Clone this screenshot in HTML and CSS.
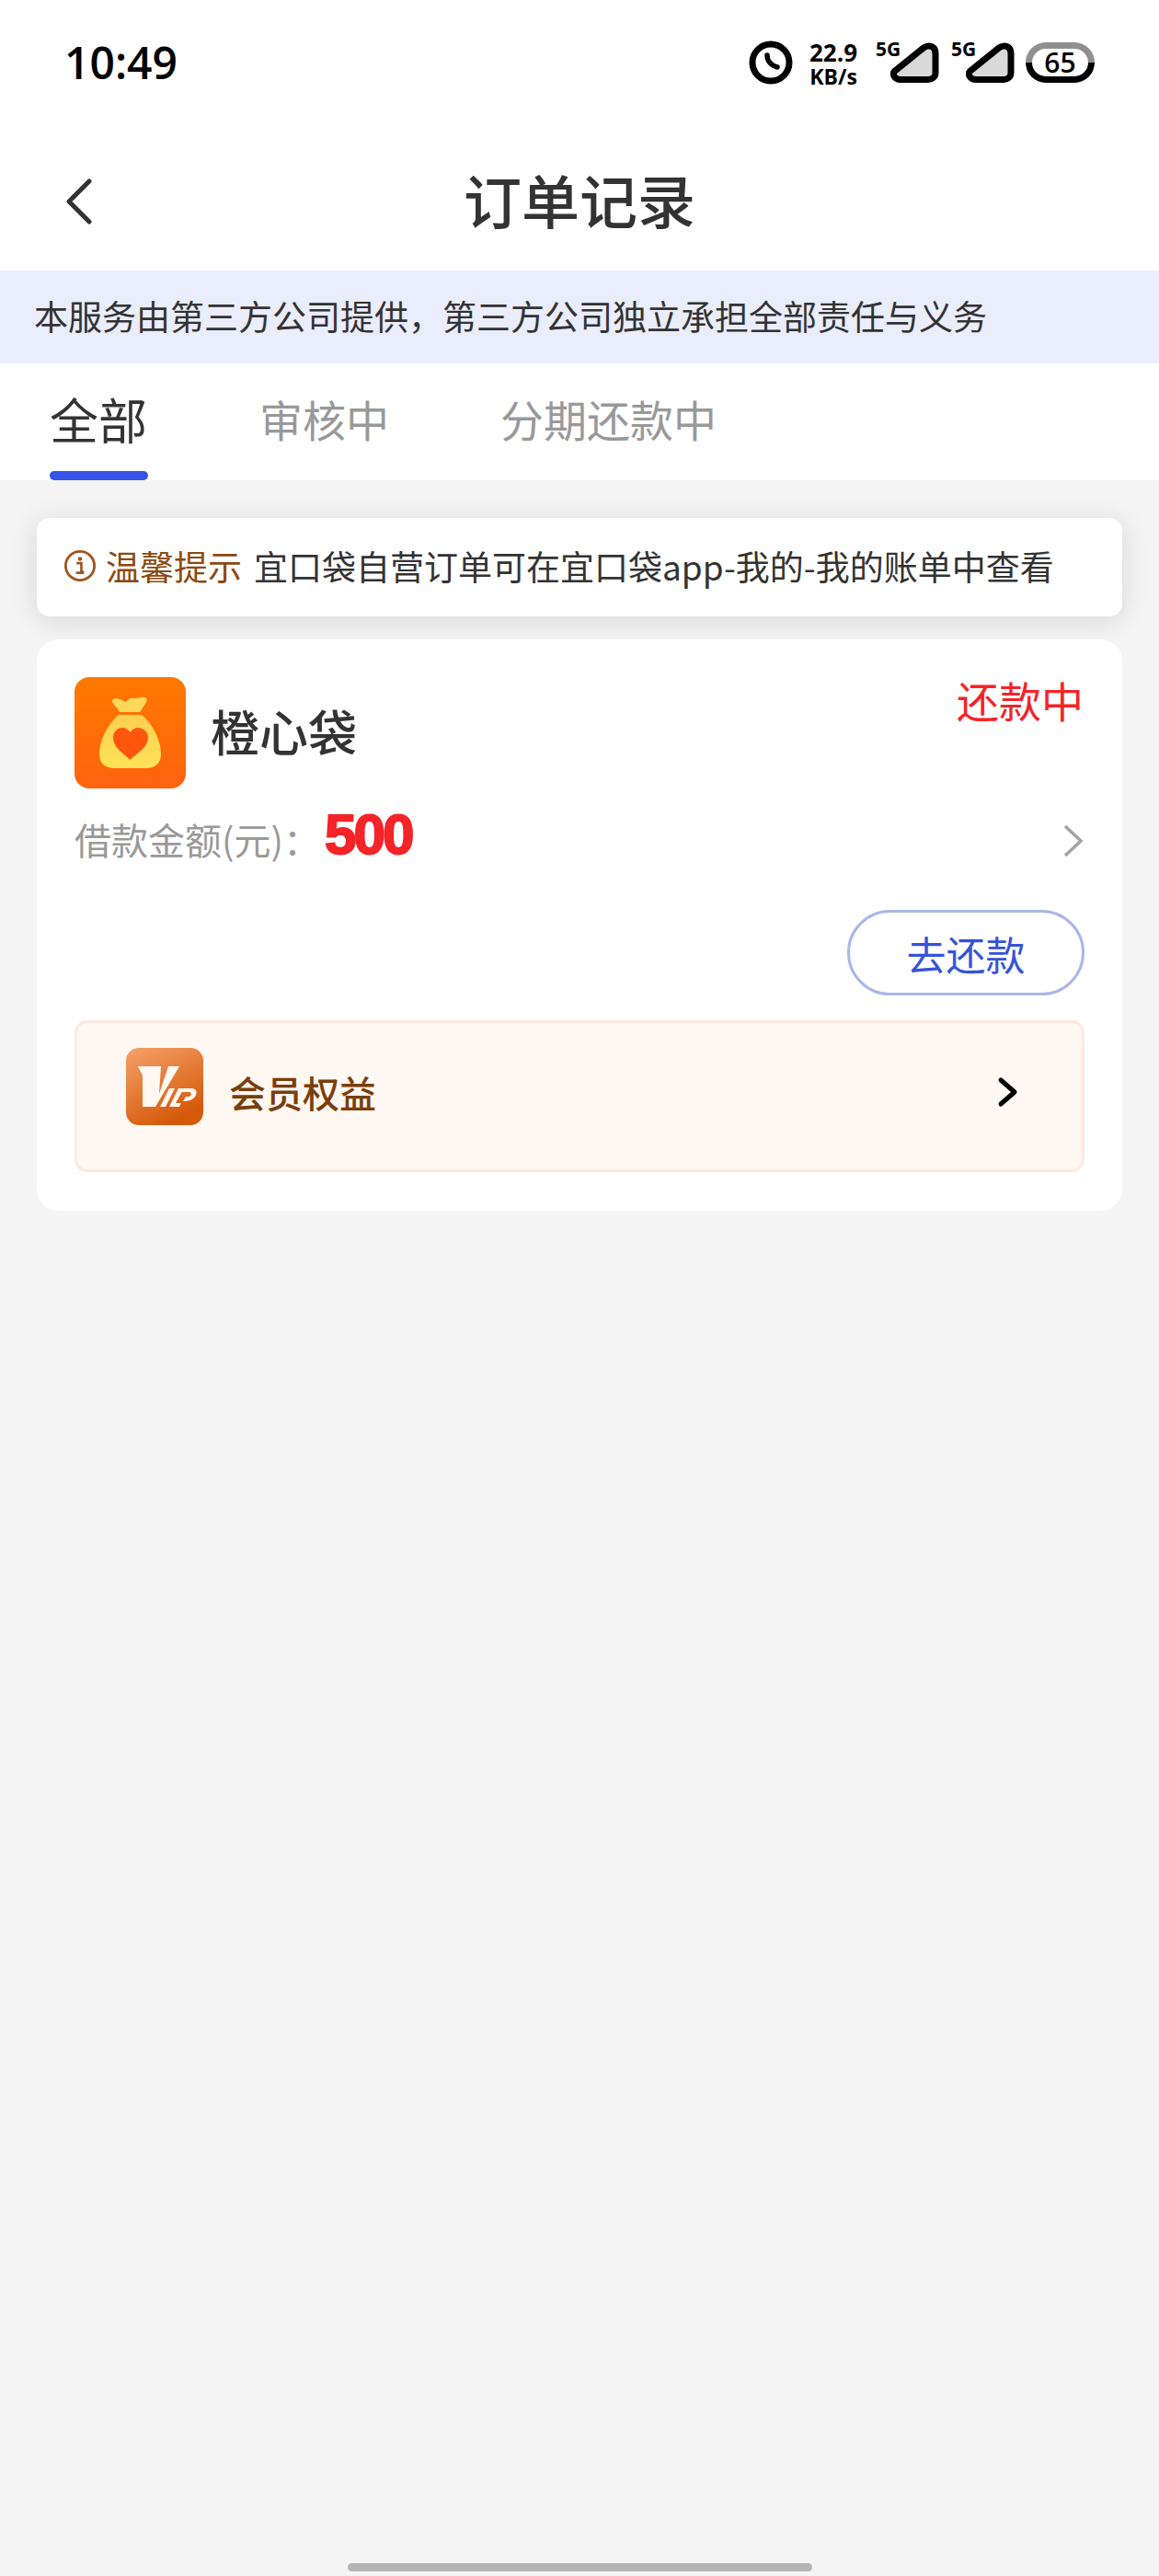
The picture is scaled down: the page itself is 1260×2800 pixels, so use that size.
FILE: index.html
```html
<!DOCTYPE html>
<html lang="zh-CN">
<head>
  <meta charset="UTF-8">
  <meta name="viewport" content="width=device-width, initial-scale=1.0">
  <title>订单记录</title>
  <link rel="stylesheet" href="styles.css">
</head>
<body>

<div class="page">
  <!-- Status bar -->
  <div class="status-bar">
    <span class="time">10:49</span>
    <div class="status-icons">
      <svg class="clock" width="48" height="48" viewBox="0 0 48 48">
        <circle cx="24" cy="24" r="20" fill="none" stroke="#000" stroke-width="7"/>
        <path d="M20 16 C20 22 24 27 31 29" fill="none" stroke="#000" stroke-width="5.500" stroke-linecap="round"/>
      </svg>
      <div class="speed">
        <span class="speed-value">22.9</span>
        <span class="speed-unit">KB/s</span>
      </div>
      <div class="signal">
        <span class="signal-label">5G</span>
        <svg width="54" height="46" viewBox="0 0 54 46">
          <path d="M5 33 L36 8 C42 4 49 6 49 14 L49 35 C49 40 45 42.500 41 42.500 L11 42.500 C4 42.500 1.500 36 5 33 Z" fill="#d9d9d9" stroke="#000" stroke-width="7" stroke-linejoin="round"/>
        </svg>
      </div>
      <div class="signal">
        <span class="signal-label">5G</span>
        <svg width="54" height="46" viewBox="0 0 54 46">
          <path d="M5 33 L36 8 C42 4 49 6 49 14 L49 35 C49 40 45 42.500 41 42.500 L11 42.500 C4 42.500 1.500 36 5 33 Z" fill="#d9d9d9" stroke="#000" stroke-width="7" stroke-linejoin="round"/>
        </svg>
      </div>
      <div class="battery">65</div>
    </div>
  </div>

  <!-- Title -->
  <div class="nav-bar">
    <svg class="back" width="32" height="52" viewBox="0 0 32 52">
      <path d="M27 3 L5 25 L27 47" fill="none" stroke="#333" stroke-width="5" stroke-linecap="round" stroke-linejoin="round"/>
    </svg>
    <h1>订单记录</h1>
  </div>

  <div class="notice">本服务由第三方公司提供，第三方公司独立承担全部责任与义务</div>

  <div class="tabs">
    <div class="tab active">全部</div>
    <div class="tab">审核中</div>
    <div class="tab">分期还款中</div>
  </div>

  <div class="content">
    <div class="tip">
      <svg width="36" height="36" viewBox="0 0 38 38">
        <circle cx="19" cy="19" r="16.500" fill="none" stroke="#a0561f" stroke-width="3"/>
        <circle cx="19" cy="11" r="2.400" fill="#a0561f"/>
        <path d="M15 16 H20.500 V26 H23.500 M14.500 27 H23.500" fill="none" stroke="#a0561f" stroke-width="2.800"/>
      </svg>
      <span class="tip-label">温馨提示</span>
      <span class="tip-text">宜口袋自营订单可在宜口袋app-我的-我的账单中查看</span>
    </div>

    <div class="card">
      <div class="card-head">
        <div class="app">
          <svg class="app-icon" width="121" height="121" viewBox="0 0 121 121">
            <defs>
              <linearGradient id="appBg" x1="0" y1="0" x2="0" y2="1">
                <stop offset="0" stop-color="#ff7a00"/>
                <stop offset="1" stop-color="#ff620f"/>
              </linearGradient>
              <linearGradient id="bag" x1="0" y1="0" x2="0" y2="1">
                <stop offset="0" stop-color="#ffd050"/>
                <stop offset="1" stop-color="#ffe258"/>
              </linearGradient>
            </defs>
            <rect width="121" height="121" rx="16" fill="url(#appBg)"/>
            <path d="M42 24 C46 22 52 25 55 27 C58 26 60 22 65 23 C70 24 74 20 78 23 C80 26 76 30 73 35 L71 38 H49 C47 33 38 27 42 24 Z" fill="#ffd85a"/>
            <path d="M48 41 H73 C84 50 94 68 94 84 C94 94 87 99 78 99 H43 C34 99 27 94 27 84 C27 68 37 50 48 41 Z" fill="url(#bag)"/>
            <path d="M60.500 90 C52 82 42 76 42 66 C42 59 47 55 52 55 C55.500 55 58.500 57 60.500 60 C62.500 57 65.500 55 69 55 C74 55 80 59 80 66 C80 76 69 82 60.500 90 Z" fill="#ff550d"/>
          </svg>
          <span class="app-name">橙心袋</span>
        </div>
        <span class="status">还款中</span>
      </div>

      <div class="amount-row">
        <div class="amount">
          <span class="amount-label">借款金额(元)：</span>
          <span class="amount-value">500</span>
        </div>
        <svg class="amount-arrow" width="24" height="38" viewBox="0 0 24 38">
          <path d="M3 3 L20 19 L3 35" fill="none" stroke="#a3a3a3" stroke-width="3.500"/>
        </svg>
      </div>

      <div class="actions">
        <button class="repay">去还款</button>
      </div>

      <div class="vip">
        <svg class="vip-icon" width="84" height="84" viewBox="0 0 84 84">
          <defs>
            <linearGradient id="vipBg" x1="0" y1="0" x2="0.500" y2="1">
              <stop offset="0" stop-color="#f7a26b"/>
              <stop offset="1" stop-color="#d55a0a"/>
            </linearGradient>
          </defs>
          <rect width="84" height="84" rx="14" fill="url(#vipBg)"/>
          <path d="M13 20 H38 L36 50 L46 20 H58 L32 64 H18 L18 30 Z" fill="#fff8f2"/>
          <path d="M47 44 H53 L43 64 H37 Z" fill="#fff8f2"/>
          <path d="M57 44 H63 L54 60 H60 L58 64 H47 Z" fill="#fff8f2"/>
          <path d="M62 44 H71 C77 44 78 49 75 53 C73 56 68 58 62 58 L65 53 H68 C71 53 72 48 69 48 H60 Z" fill="#fff8f2"/>
        </svg>
        <span class="vip-text">会员权益</span>
        <svg class="vip-arrow" width="24" height="34" viewBox="0 0 24 34">
          <path d="M4 4 L19 17 L4 30" fill="none" stroke="#000" stroke-width="5" stroke-linecap="round" stroke-linejoin="round"/>
        </svg>
      </div>
    </div>
  </div>

  <div class="home-bar"></div>
</div>

</body>
</html>
```

FILE: styles.css
```css
* {
  box-sizing: border-box;
}
html, body {
  margin: 0;
  padding: 0;
}
body {
  font-family: "Noto Sans CJK SC", "Noto Sans", sans-serif;
  color: #333;
  background-color: #f4f4f4;
}
.page {
  width: 1260px;
  height: 2800px;
  display: flex;
  flex-direction: column;
  overflow: hidden;
}

/* Status bar */
.status-bar {
  height: 134px;
  padding: 44px 70px 0 70px;
  display: flex;
  justify-content: space-between;
  align-items: flex-start;
  background: #fff;
  color: #000;
}
.time {
  font-family: "Open Sans", sans-serif;
  font-size: 48px;
  font-weight: 600;
  line-height: 48px;
}
.status-icons {
  display: flex;
  align-items: flex-start;
}
.speed {
  width: 52px;
  margin-left: 18px;
  display: flex;
  flex-direction: column;
  align-items: center;
  font-family: "Open Sans", sans-serif;
  font-weight: 700;
  color: #000;
}
.speed-value {
  font-size: 26px;
  line-height: 27px;
}
.speed-unit {
  font-size: 23px;
  line-height: 25px;
}
.signal {
  position: relative;
  width: 54px;
  height: 46px;
  margin-left: 36px;
}
.signal + .signal {
  margin-left: 28px;
}
.signal svg {
  display: block;
}
.signal-label {
  position: absolute;
  left: -16px;
  top: -3px;
  font-family: "Open Sans", sans-serif;
  font-size: 21px;
  line-height: 24px;
  font-weight: 700;
}
.battery {
  width: 75px;
  height: 44px;
  margin: 2px 0 0 11px;
  border: 7px solid transparent;
  border-radius: 22px;
  background: linear-gradient(#fff, #fff) padding-box, linear-gradient(#8f8f8f 50%, #000 50%) border-box;
  display: flex;
  align-items: center;
  justify-content: center;
  font-family: "Open Sans", sans-serif;
  font-size: 30px;
  font-weight: 600;
  line-height: 30px;
}

/* Title */
.nav-bar {
  position: relative;
  height: 160px;
  background: #fff;
  display: flex;
  align-items: flex-start;
  justify-content: center;
}
.back {
  position: absolute;
  left: 70px;
  top: 60px;
}
h1 {
  margin: 40px 0 0;
  font-size: 63px;
  font-weight: 500;
  line-height: 84px;
  color: #333;
}
.notice {
  height: 101px;
  padding-left: 37px;
  font-size: 37px;
  line-height: 98px;
  background: #e9edfc;
  color: #333;
}

/* Tabs */
.tabs {
  height: 127px;
  padding-left: 54px;
  background: #fff;
  display: flex;
  gap: 121px;
}
.tab {
  height: 127px;
  padding-top: 27px;
  display: flex;
  flex-direction: column;
  font-size: 47px;
  line-height: 66px;
  color: #999;
}
.tab.active {
  font-size: 53px;
  width: 107px;
  color: #333;
}
.tab.active::after {
  content: "";
  height: 10px;
  margin-top: auto;
  background: #3653e8;
  border-radius: 5px;
}

/* Content */
.content {
  flex: 1;
  padding: 41px 40px 0;
}
.tip {
  height: 107px;
  padding: 0 0 3px 29px;
  display: flex;
  align-items: center;
  background: #fff;
  border-radius: 14px;
  box-shadow: 0 4px 30px rgba(0, 0, 0, 0.12);
  font-size: 37px;
}
.tip-label {
  margin-left: 10px;
  color: #8a4a12;
}
.tip-text {
  margin-left: 13px;
  color: #333;
}
.card {
  height: 621px;
  margin-top: 25px;
  padding: 41px 41px 0;
  background: #fff;
  border-radius: 24px;
}
.card-head {
  display: flex;
  justify-content: space-between;
  align-items: flex-start;
}
.app {
  display: flex;
  align-items: center;
  gap: 27px;
}
.app-icon {
  display: block;
}
.app-name {
  margin-bottom: 6px;
  font-size: 53px;
  font-weight: 500;
  color: #333;
}
.status {
  margin-right: 1px;
  font-size: 46px;
  line-height: 48px;
  color: #f42428;
}
.amount-row {
  height: 60px;
  margin-top: 20px;
  display: flex;
  justify-content: space-between;
  align-items: center;
}
.amount {
  display: flex;
  align-items: center;
  gap: 5px;
}
.amount-label {
  margin-top: 10px;
  font-size: 40px;
  color: #999;
}
.amount-value {
  font-family: "Liberation Sans", sans-serif;
  font-size: 62px;
  font-weight: 700;
  line-height: 60px;
  letter-spacing: -3px;
  color: #f42428;
  -webkit-text-stroke: 2px #f42428;
}
.amount-arrow {
  margin-top: 14px;
}
.actions {
  margin-top: 52px;
  display: flex;
  justify-content: flex-end;
}
.repay {
  width: 258px;
  height: 93px;
  padding: 0;
  font-family: inherit;
  font-size: 43px;
  color: #3653d8;
  background: #fff;
  border: 3px solid #a9b8ea;
  border-radius: 47px;
}
.vip {
  height: 165px;
  margin-top: 27px;
  padding: 27px 68px 0 53px;
  display: flex;
  align-items: flex-start;
  background: #fef7f2;
  border: 3px solid #fbe9df;
  border-radius: 14px;
}
.vip-icon {
  display: block;
}
.vip-text {
  margin: 21px 0 0 28px;
  font-size: 40px;
  font-weight: 500;
  line-height: 54px;
  color: #7a3e0a;
}
.vip-arrow {
  margin: 31px 0 0 auto;
}

/* Bottom gesture bar */
.home-bar {
  width: 505px;
  height: 9px;
  margin: 0 auto 5px;
  border-radius: 5px;
  background: #b4b4b4;
}
```
